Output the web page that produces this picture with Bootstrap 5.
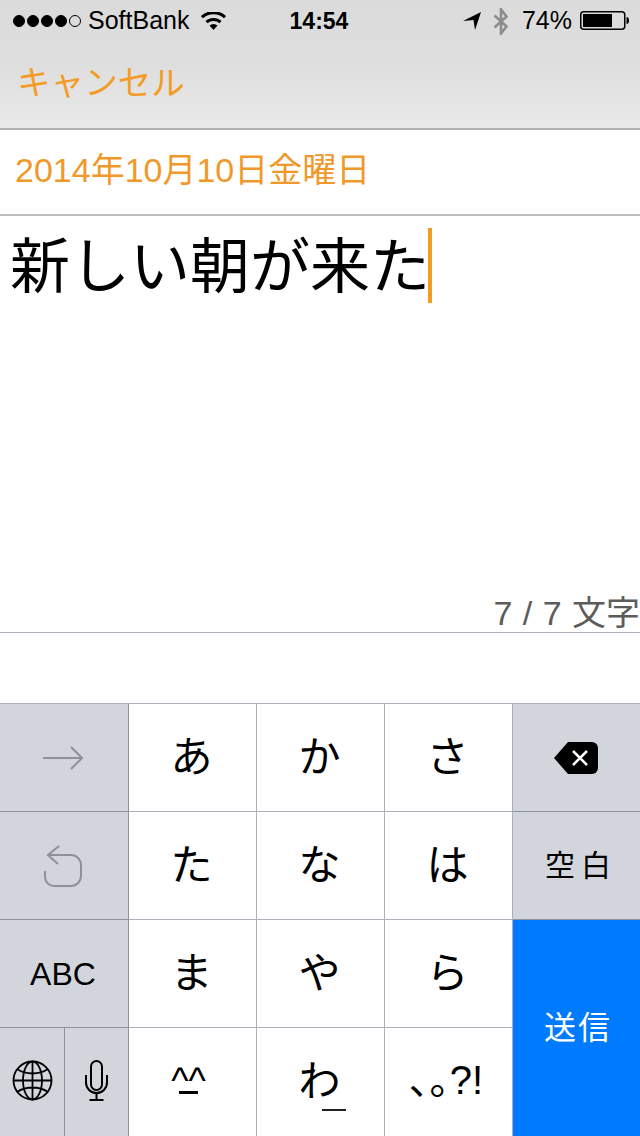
<!DOCTYPE html>
<html lang="ja">
<head>
<meta charset="utf-8">
<title>日記</title>
<link href="https://cdn.jsdelivr.net/npm/bootstrap@5.3.0/dist/css/bootstrap.min.css" rel="stylesheet">
<style>
html,body{margin:0;padding:0;background:#fff;}
body{width:640px;height:1136px;overflow:hidden;font-family:"Liberation Sans","Noto Sans CJK JP",sans-serif;color:#000;}
.topbar{height:130px;background:linear-gradient(#dbdbdb,#dedede 50%,#e9e9e9);border-bottom:2px solid #b2b2b2;}
.statusrow{height:41px;font-size:25px;padding:1px 11px 0 13px;}
.stat-dots{gap:2px;width:69px;}
.stat-dot{width:12px;height:12px;border-radius:50%;background:#000;border:1px solid #000;}
.stat-dot-off{background:transparent;}
.carrier{margin-left:6px;}
.wifi-ic{margin-left:12px;}
.clock{font-weight:700;font-size:23px;}
.stat-left{width:266px;}
.stat-right{width:270px;}
.bt-ic{margin-left:12px;}
.pct{margin-left:13px;}
.batt-ic{margin:0 0 2px 8px;}
.cancel{font-size:33.6px;line-height:42px;color:#f39c25;padding:22px 0 0 17px;}
.datebar{height:86px;font-size:34px;color:#f0992a;padding:0 0 3px 15px;border-bottom:2px solid #bdbdc0;}
.editor{height:381px;padding-left:10px;padding-top:12px;}
.editline{display:inline-block;height:75px;font-size:60px;line-height:75px;padding-top:2px;vertical-align:top;}
.caret{display:inline-block;width:4px;height:75px;background:#f39c25;vertical-align:top;margin-left:-2px;}
.counter{font-size:34px;line-height:32px;color:#5c5c5c;text-align:right;height:35px;word-spacing:1px;border-bottom:1px solid #a9b0ba;box-sizing:content-box;white-space:nowrap;}
.counterwrap{height:106px;}
.kb{display:grid;grid-template-columns:65px 64px 128px 128px 128px 127px;grid-template-rows:108px 108px 108px 108px;height:433px;border-top:1px solid #a9b0ba;background:#fff;}
.kk{display:flex;align-items:center;justify-content:center;border-right:1px solid #a9b0ba;border-bottom:1px solid #a9b0ba;background:#fff;font-size:42px;line-height:1;padding-right:2px;}
.kk-gray{background:#d2d5db;border-color:#8e9299;}
.kk-wide{grid-column:span 2;}
.kk-abc{font-size:32px;}
.kk-space{font-size:30px;letter-spacing:6px;padding:0 0 0 9px;border-right:0;}
.kk-del{border-right:0;}
.kk-send{grid-row:span 2;background:#007aff;color:#fff;font-size:32px;letter-spacing:2px;border:0;padding:0 0 0 3px;}
.kk-last{border-bottom:0;}
.kk-tool{padding:0 0 4px 0;}
.kk-wa{position:relative;}
.wa-under{position:absolute;left:65px;top:81px;width:24px;height:2px;background:#222;}
.kk-smile{font-size:37px;flex-direction:column;line-height:30px;padding:0 8px 4px 0;}
.smile-mouth{display:block;width:19px;height:3px;background:#000;margin-top:-5px;}
.kk-punct{font-size:40px;letter-spacing:0;padding:0 4px 4px 0;}
</style>
</head>
<body>
<header class="topbar">
  <div class="statusrow d-flex align-items-center justify-content-between">
    <div class="stat-left d-flex align-items-center">
      <div class="stat-dots d-flex">
        <span class="stat-dot"></span><span class="stat-dot"></span><span class="stat-dot"></span><span class="stat-dot"></span><span class="stat-dot stat-dot-off"></span>
      </div>
      <span class="carrier">SoftBank</span>
      <svg class="wifi-ic" width="25" height="18" viewBox="0 0 25 18"><path d="M12.500 18 8.500 13.600a6 6 0 0 1 8 0Z" fill="#000"/><path d="M5.500 10.200a10.200 10.200 0 0 1 14 0M1 5.200a16.800 16.800 0 0 1 23 0" fill="none" stroke="#000" stroke-width="3"/></svg>
    </div>
    <div class="clock">14:54</div>
    <div class="stat-right d-flex align-items-center justify-content-end">
      <svg width="18" height="18" viewBox="0 0 18 18"><path d="M0 9 18 0 12 18 10.500 8Z" fill="#000"/></svg>
      <svg class="bt-ic" width="16" height="27" viewBox="0 0 16 27"><path d="M1.500 7.500 13.500 18.500 8 25.500V1.500L13.500 8.500 1.500 19.500" fill="none" stroke="#8c8c8c" stroke-width="2.600"/></svg>
      <span class="pct">74%</span>
      <svg class="batt-ic" width="49" height="19" viewBox="0 0 49 19"><rect x=".75" y=".75" width="44" height="17.500" rx="3" fill="none" stroke="#000" stroke-width="1.500"/><rect x="3" y="3" width="29" height="13" fill="#000"/><path d="M46.500 6c1.500 0 2.500 1 2.500 3.500s-1 3.500-2.500 3.500Z" fill="#000"/></svg>
    </div>
  </div>
  <div class="cancel">キャンセル</div>
</header>
<div class="datebar d-flex align-items-center">2014年10月10日金曜日</div>
<main class="editor"><span class="editline">新しい朝が来た</span><span class="caret"></span></main>
<div class="counterwrap"><div class="counter">7 / 7 文字</div></div>
<section class="kb">
  <div class="kk kk-gray kk-wide"><svg width="40" height="24" viewBox="0 0 40 24"><path d="M0 12H38M28 1 39 12 28 23" fill="none" stroke="#8e9298" stroke-width="2"/></svg></div>
  <div class="kk">あ</div><div class="kk">か</div><div class="kk">さ</div>
  <div class="kk kk-gray kk-del"><svg width="44" height="32" viewBox="0 0 44 32"><path d="M14 0H38a6 6 0 0 1 6 6V26a6 6 0 0 1-6 6H14L0 16Z" fill="#000"/><path d="M19 9 33 23M33 9 19 23" stroke="#fff" stroke-width="2.500" fill="none"/></svg></div>
  <div class="kk kk-gray kk-wide"><svg width="40" height="42" viewBox="0 0 40 42"><path d="M16 1 5 10 15 19M5 10H28a10 10 0 0 1 10 10V31a10 10 0 0 1-10 10H11A9 9 0 0 1 2 32V26" fill="none" stroke="#8e9298" stroke-width="2"/></svg></div>
  <div class="kk">た</div><div class="kk">な</div><div class="kk">は</div>
  <div class="kk kk-gray kk-space">空白</div>
  <div class="kk kk-gray kk-wide kk-abc">ABC</div>
  <div class="kk">ま</div><div class="kk">や</div><div class="kk">ら</div>
  <div class="kk kk-send">送信</div>
  <div class="kk kk-gray kk-last kk-tool"><svg width="41" height="41" viewBox="0 0 41 41"><g fill="none" stroke="#000" stroke-width="1.800"><circle cx="20.500" cy="20.500" r="19"/><ellipse cx="20.500" cy="20.500" rx="9.500" ry="19"/><path d="M20.500 1V40M1.500 20.500H39.500M5 9c9 6 22 6 31 0M5 32c9-6 22-6 31 0"/></g></svg></div>
  <div class="kk kk-gray kk-last kk-tool"><svg width="23" height="41" viewBox="0 0 23 41"><rect x="6" y="1" width="11" height="29" rx="5.500" fill="none" stroke="#000" stroke-width="2"/><path d="M1 15V22.500a10.500 10.500 0 0 0 21 0V15M11.500 33V39M4.500 40H18.500" fill="none" stroke="#000" stroke-width="2"/></svg></div>
  <div class="kk kk-last kk-smile"><span>^^</span><span class="smile-mouth"></span></div>
  <div class="kk kk-last kk-wa">わ<span class="wa-under"></span></div>
  <div class="kk kk-last kk-punct">､｡?!</div>
</section>
<script src="https://cdn.jsdelivr.net/npm/bootstrap@5.3.0/dist/js/bootstrap.bundle.min.js"></script>
</body>
</html>
